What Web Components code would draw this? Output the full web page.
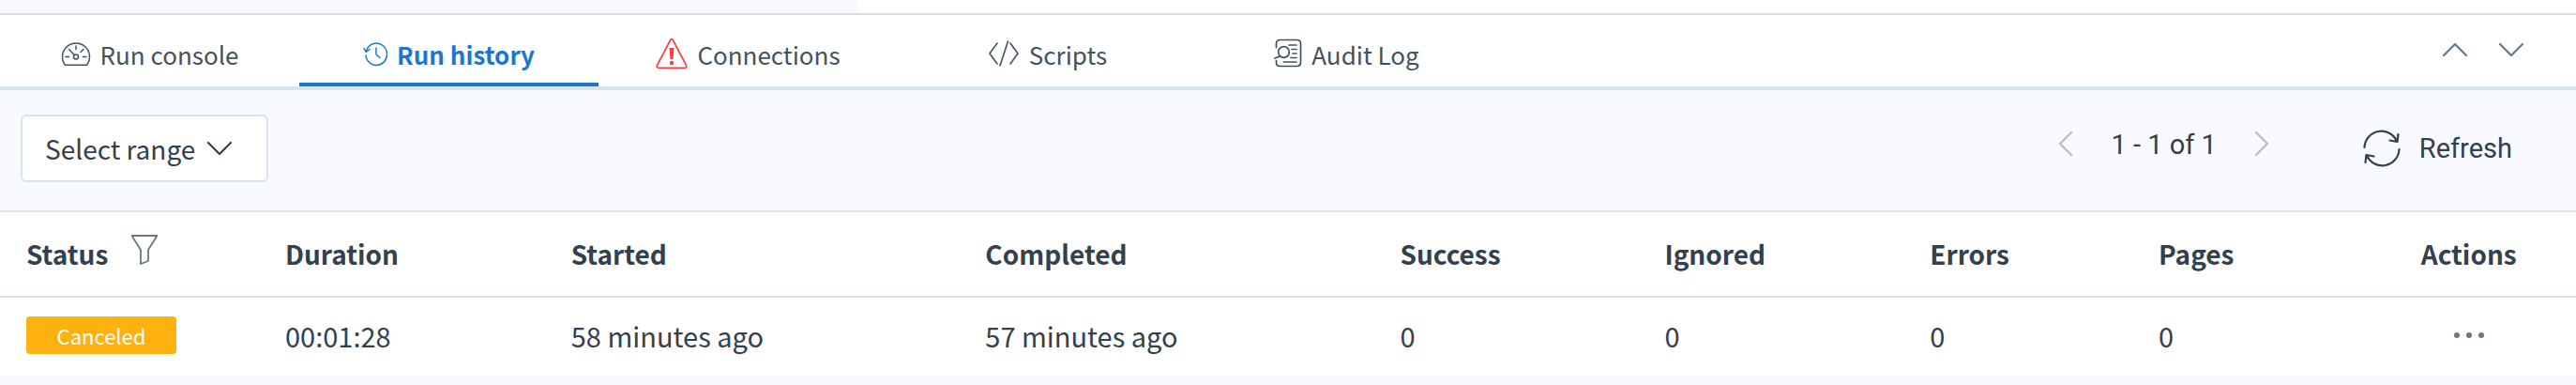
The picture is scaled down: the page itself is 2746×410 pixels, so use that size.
<!DOCTYPE html>
<html lang="en"><head><meta charset="utf-8"><title>Run history</title>
<style>
body{margin:0;background:#f8faff;color:#33404d;font-family:"Noto Sans CJK SC","Noto Sans",sans-serif}
</style></head><body>
<run-panel></run-panel>
<script>
const ICONS={
gauge:'<svg width="32" height="28" viewBox="0 0 32 28"><g fill="none" stroke="currentColor" stroke-width="1.5" stroke-linecap="round"><path d="M4.500 26.300A14.500 14.500 0 1 1 27.500 26.300Z" stroke-linejoin="round"/><circle cx="16" cy="17.500" r="2.500"/><path d="M14.200 15.500 8.500 9.500M16 6v3.500M24 9.500l-3 3M5 17.500h3.500M23.500 17.500h3.500"/></g></svg>',
history:'<svg width="26" height="28" viewBox="0 0 26 28"><g fill="none" stroke="currentColor" stroke-width="1.500" stroke-linecap="round" stroke-linejoin="round"><path d="M3.500 11A11.300 11.700 0 1 1 3 16"/><path d="M1 8.500 3.200 12.500 7 9.500M14 8v7l4 3.500"/></g></svg>',
alert:'<svg width="34" height="34" viewBox="0 0 34 34"><path d="M15.700 2.500Q17 .5 18.300 2.500L32.500 29.500Q33.500 32 31 32.300H3Q.5 32 1.500 29.500Z" fill="none" stroke="#fb3e3e" stroke-width="1.700"/><path d="M14.500 11h5l-1 12h-3z" fill="#fb3e3e"/><circle cx="17" cy="27" r="2.200" fill="#fb3e3e"/></svg>',
code:'<svg width="34" height="28" viewBox="0 0 34 28"><path d="M10 3 2 14l8 11M24 3l8 11-8 11M21.500 1 13 27" fill="none" stroke="currentColor" stroke-width="1.600" stroke-linecap="round"/></svg>',
audit:'<svg width="30" height="32" viewBox="0 0 30 32"><g fill="none" stroke="currentColor" stroke-width="1.700" stroke-linecap="round"><path d="M2.500 9.500V5.500q0-4 4-4h18q4 0 4 4v20q0 4-4 4H6.500q-4 0-4-4v-2"/><circle cx="10.500" cy="14.500" r="5.800"/><path d="M6.500 19 1 21M16 7h8M19 11.500h5M20 16h4M18 20.500h6M10.500 25h13.500"/></g></svg>',
up:'<svg width="28" height="16" viewBox="0 0 28 16"><path d="M2 14 14 2l12 12" fill="none" stroke="currentColor" stroke-width="2.200" stroke-linecap="round" stroke-linejoin="round"/></svg>',
down:'<svg width="28" height="16" viewBox="0 0 28 16"><path d="M2 2 14 14 26 2" fill="none" stroke="currentColor" stroke-width="2.200" stroke-linecap="round" stroke-linejoin="round"/></svg>',
prev:'<svg width="16" height="28" viewBox="0 0 16 28"><path d="M14 2 2 14l12 12" fill="none" stroke="currentColor" stroke-width="2.200" stroke-linecap="round" stroke-linejoin="round"/></svg>',
next:'<svg width="16" height="28" viewBox="0 0 16 28"><path d="M2 2 14 14 2 26" fill="none" stroke="currentColor" stroke-width="2.200" stroke-linecap="round" stroke-linejoin="round"/></svg>',
refresh:'<svg width="40" height="40" viewBox="0 0 40 40"><path d="M1.500 19A18 18 0 0 1 36 12.500M28.500 11.500l8 1.500 1-8M38.500 21A18 18 0 0 1 4 27.500M11.500 28.500l-8-1.500-1 8" fill="none" stroke="currentColor" stroke-width="2.200" stroke-linecap="round" stroke-linejoin="round"/></svg>',
filter:'<svg width="30" height="34" viewBox="0 0 30 34"><path d="M1 2h28M1.500 2 11 17V32l8-3V17L28.500 2" fill="none" stroke="currentColor" stroke-width="1.800"/></svg>',
dots:'<svg width="34" height="8" viewBox="0 0 34 8"><g fill="currentColor"><circle cx="4" cy="4" r="3"/><circle cx="17" cy="4" r="3"/><circle cx="30" cy="4" r="3"/></g></svg>'
};
const BASE='*{box-sizing:border-box}svg{display:block}button{font:inherit;color:inherit;background:none;border:0;padding:0;margin:0;cursor:pointer}';
function define(name,css,html){
  customElements.define(name,class extends HTMLElement{
    constructor(){super();const t=document.createElement('template');
      t.innerHTML='<style>'+BASE+css+'</style>'+(typeof html==='function'?html(this):html);
      this.attachShadow({mode:'open'}).append(t.content.cloneNode(true));}
  });
}
define('ui-icon',':host{display:inline-flex;flex:none}',el=>ICONS[el.getAttribute('name')]);
define('run-tab',':host{display:flex;width:319px;height:76px;color:#44515e;font-size:26px}button{flex:1;display:flex;align-items:center;justify-content:center;gap:10px;border-bottom:4px solid transparent;padding-top:10px}:host([selected]) button{color:#1e76cc;border-color:#1e76cc;font-weight:700}',
  '<button role="tab"><slot name="icon"></slot><slot></slot></button>');
define('tab-bar',':host{display:flex;align-items:flex-end;justify-content:space-between;box-sizing:border-box;height:82px;background:#fff;border-top:2px solid #dadce0;border-bottom:4px solid #d6e4ed}nav{display:flex}.size{display:flex;align-self:center;gap:32px;padding-right:55px;color:#677988}',
  '<nav role="tablist"><slot></slot></nav><div class="size"><button aria-label="Expand"><ui-icon name="up"></ui-icon></button><button aria-label="Collapse"><ui-icon name="down"></ui-icon></button></div>');
define('history-toolbar',':host{display:flex;align-items:center;box-sizing:border-box;height:128px;padding:0 68px 4px 22px}.range{height:72px;width:264px;padding:0 24px;display:flex;align-items:center;gap:12px;background:#fff;border:2px solid #d6e4ed;border-radius:6px;font-size:28px}.pager{display:flex;align-items:center;margin-left:auto;padding-bottom:4px;gap:40px;font:29px Roboto,sans-serif}.pager span{padding-bottom:4px}.pager button{color:#b8bbbf}.refresh{display:flex;align-items:center;gap:20px;margin-left:100px;font:29px Roboto,sans-serif}',
  '<button class="range">Select range<ui-icon name="down"></ui-icon></button><div class="pager"><button aria-label="Previous page"><ui-icon name="prev"></ui-icon></button><span>1 - 1 of 1</span><button aria-label="Next page"><ui-icon name="next"></ui-icon></button></div><button class="refresh"><ui-icon name="refresh"></ui-icon>Refresh</button>');
define('status-badge',':host{display:block;width:160px;height:40px;background:#ffb20f;color:#fff;border-radius:4px;font-size:22px;line-height:40px;text-align:center}','<slot></slot>');
define('history-table',':host{display:block;background:#fff;border-top:2px solid #d6e4ed}table{width:100%;border-collapse:collapse;table-layout:fixed}th{height:90px;border-bottom:2px solid #d6e4ed;text-align:left;font-size:28px;font-weight:700;padding:0 0 2px 28px}td{height:84px;padding:0 0 4px 28px;font-size:29px}.s{display:flex;align-items:center;gap:24px}.s button,td button{color:#677988}th:last-child,td:last-child{text-align:center;padding-left:0}td button{display:flex;margin:0 auto}',
  `<table><colgroup><col style="width:10.05%"><col style="width:11.1%"><col style="width:16.08%"><col style="width:16.1%"><col style="width:10.27%"><col style="width:10.3%"><col style="width:8.88%"><col style="width:8.9%"><col></colgroup>
<thead><tr><th><span class="s">Status<button aria-label="Filter by status"><ui-icon name="filter"></ui-icon></button></span></th><th>Duration</th><th>Started</th><th>Completed</th><th>Success</th><th>Ignored</th><th>Errors</th><th>Pages</th><th>Actions</th></tr></thead>
<tbody><tr><td><status-badge>Canceled</status-badge></td><td>00:01:28</td><td>58 minutes ago</td><td>57 minutes ago</td><td>0</td><td>0</td><td>0</td><td>0</td><td><button aria-label="Row actions"><ui-icon name="dots"></ui-icon></button></td></tr></tbody></table>`);
define('run-panel',':host{display:block}.top{display:grid;grid-template-columns:1fr 2fr;height:14px}.top :last-child{background:#fff}',
 `<div class="top"><i></i><i></i></div><tab-bar>
<run-tab><ui-icon slot="icon" name="gauge"></ui-icon>Run console</run-tab>
<run-tab selected><ui-icon slot="icon" name="history"></ui-icon>Run history</run-tab>
<run-tab><ui-icon slot="icon" name="alert"></ui-icon>Connections</run-tab>
<run-tab><ui-icon slot="icon" name="code"></ui-icon>Scripts</run-tab>
<run-tab><ui-icon slot="icon" name="audit"></ui-icon>Audit Log</run-tab>
</tab-bar><history-toolbar></history-toolbar><history-table></history-table>`);
</script></body></html>
